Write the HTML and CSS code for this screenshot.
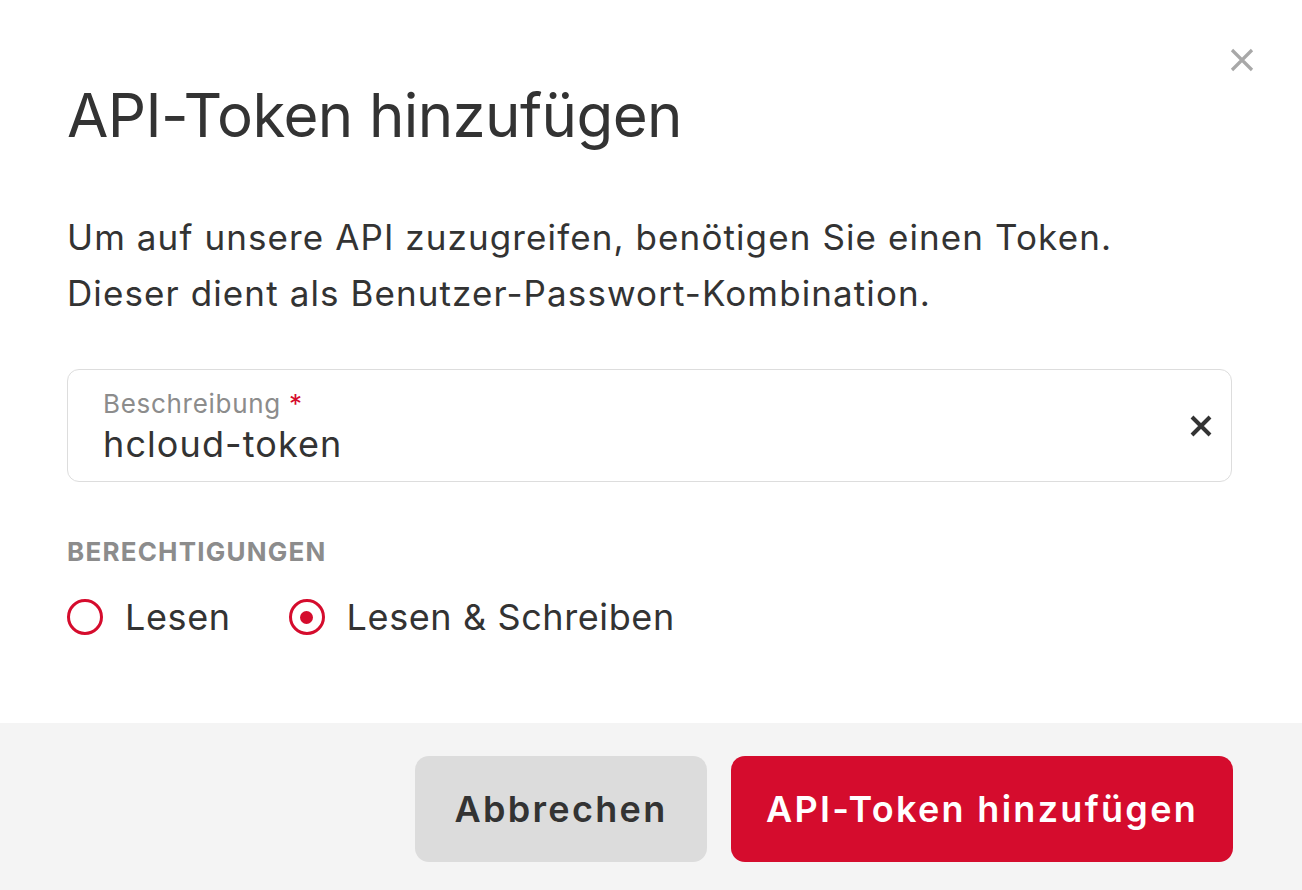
FILE: index.html
```html
<!DOCTYPE html>
<html lang="de">
<head>
<meta charset="utf-8">
<title>API-Token hinzufügen</title>
<link rel="stylesheet" href="styles.css">
</head>
<body>
<div class="dialog">
  <main class="content">
    <button class="close" aria-label="Schließen">
      <svg width="24" height="24" viewBox="0 0 24 24"><path d="M2 2L22 22M22 2L2 22" stroke="#a8a8a8" stroke-width="3.2" stroke-linecap="butt"/></svg>
    </button>
    <h1 class="title">API-Token hinzufügen</h1>
    <p class="intro">Um auf unsere API zuzugreifen, benötigen Sie einen Token.<br>Dieser dient als Benutzer-Passwort-Kombination.</p>
    <div class="field">
      <div class="field-body">
        <label class="field-label">Beschreibung <span class="req">*</span></label>
        <div class="field-value">hcloud-token</div>
      </div>
      <button class="clear" aria-label="Leeren">
        <svg width="24" height="24" viewBox="0 0 24 24"><path d="M3 3L21 21M21 3L3 21" stroke="#333333" stroke-width="4" stroke-linecap="butt"/></svg>
      </button>
    </div>
    <div class="section-label">BERECHTIGUNGEN</div>
    <div class="radios">
      <label class="radio"><span class="radio-circle"></span><span class="radio-text">Lesen</span></label>
      <label class="radio"><span class="radio-circle checked"></span><span class="radio-text">Lesen &amp; Schreiben</span></label>
    </div>
  </main>
  <footer class="footer">
    <button class="btn btn-secondary">Abbrechen</button>
    <button class="btn btn-primary">API-Token hinzufügen</button>
  </footer>
</div>
</body>
</html>
```
FILE: styles.css
```css
html, body {
  margin: 0;
  padding: 0;
  height: 100%;
  background: #ffffff;
}
body {
  font-family: Inter, "Noto Sans", sans-serif;
  color: #333333;
}
.dialog {
  display: flex;
  flex-direction: column;
  height: 100vh;
}
.content {
  flex: 1;
  position: relative;
  padding: 79px 70px 0 67px;
}
.close {
  position: absolute;
  top: 48px;
  right: 48px;
  width: 24px;
  height: 24px;
  padding: 0;
  border: 0;
  background: none;
  display: flex;
}
.title {
  margin: 0;
  font-family: Inter, sans-serif;
  font-weight: 400;
  font-size: 60px;
  line-height: 72px;
  letter-spacing: -0.6px;
  color: #333333;
}
.intro {
  margin: 58px 0 0;
  font-size: 35px;
  line-height: 56px;
  letter-spacing: 1.1px;
  color: #333333;
}
.field {
  margin-top: 48px;
  height: 113px;
  box-sizing: border-box;
  border: 1px solid #dddddd;
  border-radius: 12px;
  display: flex;
  align-items: center;
  padding: 0 18px 0 35px;
}
.field-body {
  flex: 1;
  display: flex;
  flex-direction: column;
  gap: 4px;
  padding-top: 2px;
}
.field-label {
  font-size: 26px;
  line-height: 30px;
  letter-spacing: 0.7px;
  color: #8c8c8c;
}
.req {
  color: #d50c2d;
}
.field-value {
  font-size: 36px;
  line-height: 42px;
  letter-spacing: 1.1px;
  color: #333333;
}
.clear {
  width: 24px;
  height: 24px;
  padding: 0;
  border: 0;
  background: none;
  display: flex;
}
.section-label {
  margin-top: 55px;
  font-size: 26px;
  line-height: 30px;
  font-weight: 700;
  letter-spacing: 1.2px;
  color: #8c8c8c;
}
.radios {
  margin-top: 30px;
  display: flex;
  gap: 58px;
}
.radio {
  display: flex;
  align-items: center;
  gap: 22px;
}
.radio-circle {
  width: 36px;
  height: 36px;
  box-sizing: border-box;
  border: 3.5px solid #d50c2d;
  border-radius: 50%;
  display: flex;
  align-items: center;
  justify-content: center;
}
.radio-circle.checked::after {
  content: "";
  width: 13px;
  height: 13px;
  border-radius: 50%;
  background: #d50c2d;
}
.radio-text {
  font-size: 36px;
  line-height: 40px;
  letter-spacing: 0.6px;
  color: #333333;
}
.footer {
  height: 167px;
  box-sizing: border-box;
  background: #f4f4f4;
  display: flex;
  justify-content: flex-end;
  align-items: flex-start;
  gap: 24px;
  padding: 33px 69px 0 0;
}
.btn {
  height: 106px;
  border: 0;
  border-radius: 14px;
  font-family: Inter, sans-serif;
  font-weight: 600;
  font-size: 36px;
  letter-spacing: 2.3px;
  padding: 0;
}
.btn-secondary {
  background: #dcdcdc;
  color: #333333;
  width: 292px;
}
.btn-primary {
  background: #d50c2d;
  color: #ffffff;
  width: 502px;
}
```
